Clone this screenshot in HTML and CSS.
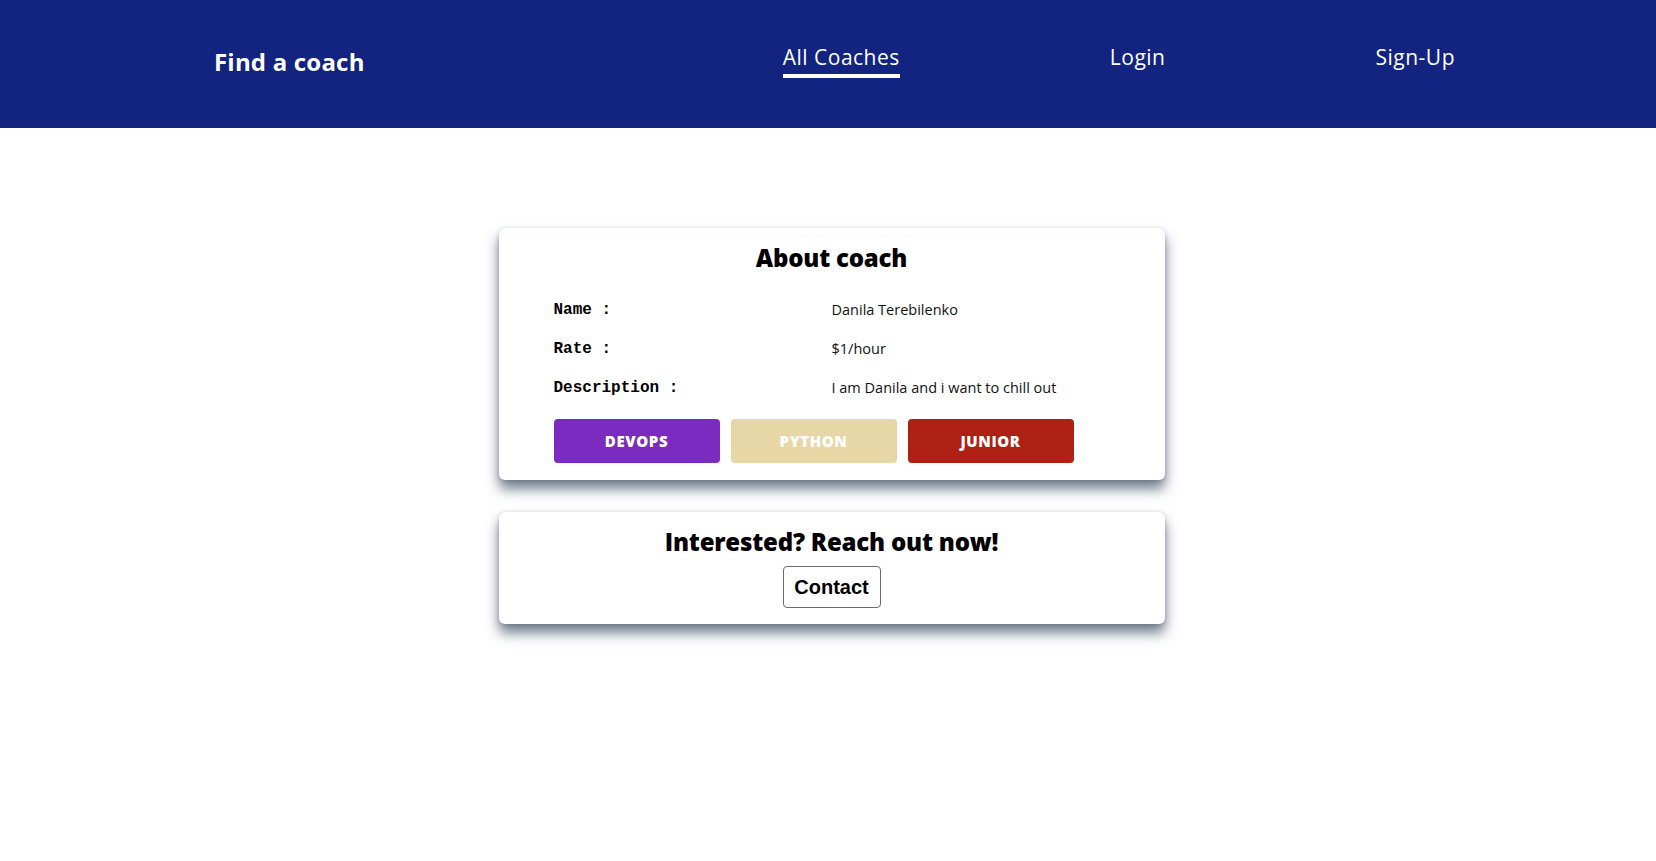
FILE: index.html
```html
<!DOCTYPE html>
<html lang="en">
<head>
<meta charset="utf-8">
<title>Find a coach</title>
<link rel="stylesheet" href="styles.css">
</head>
<body>
<header class="topbar">
  <a class="logo" href="#">Find a coach</a>
  <nav class="nav">
    <a class="nav-link active" href="#">All Coaches</a>
    <a class="nav-link" href="#">Login</a>
    <a class="nav-link" href="#">Sign-Up</a>
  </nav>
</header>
<main class="content">
  <section class="card about">
    <h2 class="card-title">About coach</h2>
    <dl class="details">
      <dt class="label">Name :</dt>
      <dd class="value">Danila Terebilenko</dd>
      <dt class="label">Rate :</dt>
      <dd class="value">$1/hour</dd>
      <dt class="label">Description :</dt>
      <dd class="value">I am Danila and i want to chill out</dd>
    </dl>
    <div class="badges">
      <span class="badge devops">DEVOPS</span>
      <span class="badge python">PYTHON</span>
      <span class="badge junior">JUNIOR</span>
    </div>
  </section>
  <section class="card contact-card">
    <h2 class="card-title">Interested? Reach out now!</h2>
    <button class="contact-btn" type="button">Contact</button>
  </section>
</main>
</body>
</html>
```
FILE: styles.css
```css
* { box-sizing: border-box; }
html, body { margin: 0; padding: 0; }
body {
  font-family: "Open Sans", "Liberation Sans", sans-serif;
  background: #fff;
  color: #000;
}
.topbar {
  height: 128px;
  background: #122380;
  display: flex;
  align-items: center;
  justify-content: space-between;
  padding: 0 201px 0 214px;
}
.logo {
  color: #fff;
  text-decoration: none;
  font-weight: 700;
  font-size: 24px;
  letter-spacing: 0.2px;
  margin-bottom: 6px;
}
.nav {
  display: flex;
  gap: 210px;
  align-items: flex-start;
  margin-bottom: 6px;
}
.nav-link {
  color: #fff;
  text-decoration: none;
  font-size: 21px;
  letter-spacing: 0.5px;
  line-height: 26px;
  padding-bottom: 4px;
  border-bottom: 4px solid transparent;
}
.nav-link.active { border-bottom-color: #fff; }
.content {
  display: flex;
  flex-direction: column;
  align-items: center;
  gap: 32px;
  padding: 100px 0 60px 7px;
}
.card {
  width: 666px;
  background: #fff;
  border-radius: 6px;
  box-shadow: 0 9px 13px rgba(55, 75, 95, 0.72), 0 1px 4px rgba(0, 0, 0, 0.18);
  padding: 15px 55px 17px;
}
.card-title {
  margin: 0;
  text-align: center;
  font-size: 24px;
  line-height: 30px;
  font-weight: 800;
  letter-spacing: -0.2px;
}
.details {
  display: grid;
  grid-template-columns: 1fr 1fr;
  margin: 17px 0 0;
}
.label, .value {
  margin: 0;
  height: 39px;
  display: flex;
  align-items: center;
}
.label {
  font-family: "Liberation Mono", "Courier New", monospace;
  font-weight: 700;
  font-size: 16px;
}
.value {
  font-size: 14.5px;
  color: #111;
}
.badges {
  display: flex;
  gap: 11px;
  margin-top: 12px;
}
.badge {
  width: 166px;
  height: 44px;
  border-radius: 4px;
  display: flex;
  align-items: center;
  justify-content: center;
  color: #fff;
  font-weight: 800;
  font-size: 15px;
  letter-spacing: 0.6px;
}
.devops { background: #7b2bbf; }
.python { background: #e8d7a6; }
.junior { background: #ae2013; }
.contact-card {
  display: flex;
  flex-direction: column;
  align-items: center;
  padding-bottom: 16px;
}
.contact-btn {
  margin-top: 9px;
  height: 42px;
  width: 98px;
  background: #fff;
  border: 1px solid #6b6b6b;
  border-radius: 4px;
  font-family: "Liberation Sans", Arial, sans-serif;
  font-weight: 700;
  font-size: 20px;
  color: #000;
  padding: 0;
}
```
